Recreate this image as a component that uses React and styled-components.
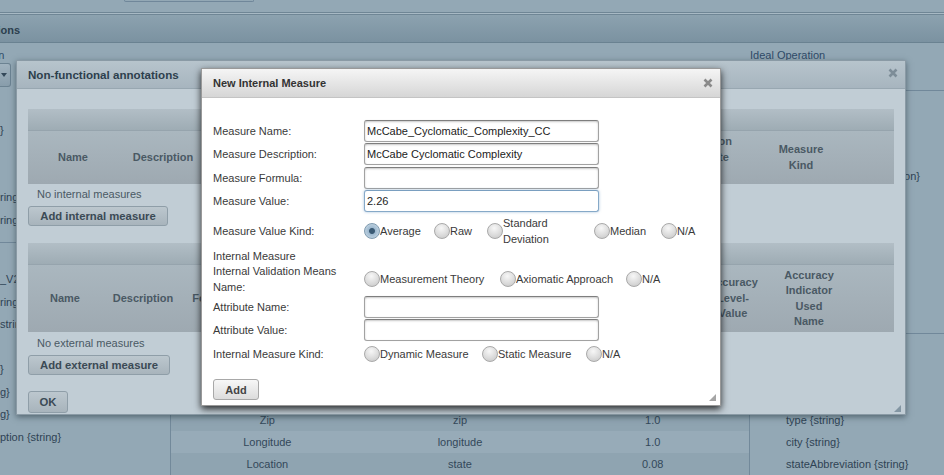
import React from "react";
import styled, { createGlobalStyle } from "styled-components";

const GlobalStyle = createGlobalStyle`
  html, body {
    margin: 0;
    padding: 0;
  }
  body {
    font-family: "Liberation Sans", Arial, sans-serif;
    font-size: 11px;
    background: #93a8b5;
  }
`;

/* ---------- background page (dimmed) ---------- */

const Page = styled.div`
  position: relative;
  width: 944px;
  height: 475px;
  overflow: hidden;
  display: flex;
  flex-direction: column;
  background: #93a8b5;
  color: #2f4354;
`;

const TopStrip = styled.div`
  height: 12px;
  padding-left: 124px;
  border-bottom: 1px solid #6f8695;
  box-shadow: 0 1px 0 #a7b9c4;
`;

const TopTab = styled.div`
  width: 128px;
  height: 1px;
  border: 1px solid #70879a;
  border-top: none;
  border-radius: 0 0 3px 3px;
`;

const SectionHeader = styled.div`
  margin-top: 1px;
  height: 27px;
  border-top: 1px solid #6f8695;
  border-bottom: 1px solid #6a8291;
  background: linear-gradient(#8ca2af, #7b92a1);
  display: flex;
  align-items: center;
  overflow: hidden;
`;

const SectionTitle = styled.span`
  margin-left: -38px;
  padding-top: 2px;
  font-weight: bold;
  color: #2c3f4e;
  white-space: nowrap;
`;

const Columns = styled.div`
  flex: 1;
  min-height: 0;
  display: grid;
  grid-template-columns: 170px 580px 1fr;
`;

const SideCol = styled.div`
  display: flex;
  flex-direction: column;
  padding-top: 4px;
  overflow: hidden;
  white-space: nowrap;
`;

const ColTitle = styled.div`
  line-height: 16px;
  margin-left: ${(p) => p.$shift || 0}px;
  color: #2f4b68;
`;

const SelectStub = styled.div`
  width: 9px;
  height: 22px;
  border: 1px solid #6c8392;
  border-left: none;
  border-radius: 0 3px 3px 0;
  background: linear-gradient(#a1b3bf, #889dab);
  display: flex;
  align-items: center;
  justify-content: flex-start;
  padding-left: 1px;
`;

const ItemList = styled.div`
  margin-top: ${(p) => p.$top || 0}px;
  padding-left: ${(p) => p.$indent || 0}px;
`;

const Item = styled.div`
  height: 22.5px;
  line-height: 22.5px;
`;

const Rule = styled.div`
  height: 1px;
  background: #71889a;
  margin-top: ${(p) => p.$top || 0}px;
`;

const CenterCol = styled.div`
  display: flex;
  flex-direction: column;
  justify-content: flex-end;
`;

const RowsBlock = styled.div`
  border-left: 1px solid #72899a;
  border-right: 1px solid #72899a;
`;

const DataRow = styled.div`
  display: grid;
  grid-template-columns: repeat(3, 1fr);
  height: 22px;
  line-height: 22px;
  text-align: center;
  color: #33485a;
  background: ${(p) => (p.$alt ? "#97abb8" : "#8fa4b1")};
`;

const BottomList = styled.div`
  margin-top: auto;
  padding-left: 36px;
`;

const BottomItem = styled.div`
  height: 22px;
  line-height: 22px;
`;

/* ---------- dialogs ---------- */

const Dialog = styled.div`
  position: absolute;
  left: ${(p) => p.$x}px;
  top: ${(p) => p.$y}px;
  width: ${(p) => p.$w}px;
  height: ${(p) => p.$h}px;
  box-sizing: border-box;
  display: flex;
  flex-direction: column;
`;

const AnnotationsDialog = styled(Dialog)`
  background: #c1cdd5;
  border: 1px solid #8a9aa5;
  box-shadow: 0 2px 6px rgba(30, 45, 55, 0.55);
`;

const MeasureDialog = styled(Dialog)`
  background: #fff;
  border: 1px solid #999;
  box-shadow: 0 3px 7px rgba(0, 0, 0, 0.8);
`;

const TitleBar = styled.div`
  flex: none;
  height: ${(p) => p.$h}px;
  display: flex;
  align-items: center;
  justify-content: space-between;
  padding: 0 7px 0 11px;
  font-weight: bold;
  font-size: ${(p) => (p.$dim ? "11.6px" : "11px")};
  background: ${(p) =>
    p.$dim ? "linear-gradient(#b7c4cc, #a7b5bf)" : "linear-gradient(#f5f5f5, #d6d6d6)"};
  border-bottom: 1px solid ${(p) => (p.$dim ? "#98a7b1" : "#c4c4c4")};
  color: ${(p) => (p.$dim ? "#2d3f4d" : "#333")};
`;

const CloseBtn = styled.svg`
  margin-top: ${(p) => p.$lift || 0}px;
`;

const Grip = styled.svg`
  position: absolute;
  right: 4px;
  bottom: ${(p) => p.$bottom}px;
`;

const DimBody = styled.div`
  padding: 20px 11px 0 11px;
  display: flex;
  flex-direction: column;
  align-items: flex-start;
`;

const Table = styled.div`
  align-self: stretch;
  margin-top: ${(p) => p.$top || 0}px;
`;

const Caption = styled.div`
  height: 21px;
  border-bottom: 1px solid #96a4ad;
  background: linear-gradient(#b2bec6, #9eacb4);
`;

const HeadRow = styled.div`
  display: grid;
  grid-template-columns: ${(p) => p.$cols};
  height: ${(p) => p.$h}px;
  background: linear-gradient(#aab7bf, #9ea9b1);
`;

const HeadCell = styled.div`
  display: flex;
  align-items: center;
  justify-content: center;
  text-align: center;
  white-space: pre-line;
  line-height: 15.5px;
  font-weight: bold;
  color: #4a5964;
`;

const EmptyNote = styled.div`
  margin-top: ${(p) => p.$top}px;
  padding-left: 9px;
  line-height: 16px;
  color: #4a5964;
`;

const DimButton = styled.button`
  margin-top: ${(p) => p.$top}px;
  height: ${(p) => p.$h || 20}px;
  width: ${(p) => p.$w}px;
  padding: 0;
  font-family: inherit;
  font-size: 11.3px;
  font-weight: bold;
  color: #3b4a55;
  background: linear-gradient(#bcc7ce, #a8b4bc);
  border: 1px solid #8f9ea8;
  border-radius: 3px;
`;

const FormBody = styled.div`
  padding: 21px 11px 0 11px;
  display: flex;
  flex-direction: column;
  align-items: flex-start;
`;

const FormRow = styled.div`
  display: grid;
  grid-template-columns: 151px auto;
  align-items: center;
  height: ${(p) => p.$h}px;
`;

const Label = styled.div`
  line-height: 16px;
  color: #3a3a3a;
`;

const TextField = styled.input`
  box-sizing: border-box;
  width: 235px;
  height: 22px;
  padding: 0 2px;
  font-family: inherit;
  font-size: 11px;
  color: #222;
  background: #fff;
  border: 1px solid ${(p) => (p.$focused ? "#86a9c8" : "#a2a2a2")};
  border-top-color: ${(p) => (p.$focused ? "#7a9fc0" : "#7e7e7e")};
  border-radius: 3px;
  box-shadow: ${(p) =>
    p.$focused
      ? "0 0 3px rgba(90, 140, 190, 0.55)"
      : "inset 0 1px 2px rgba(0, 0, 0, 0.22), 0 0 1px rgba(0, 0, 0, 0.15)"};
  outline: none;
`;

const RadioGroup = styled.div`
  display: flex;
  align-items: center;
`;

const RadioOption = styled.label`
  display: flex;
  align-items: center;
  width: ${(p) => (p.$w ? `${p.$w}px` : "auto")};
  color: #3a3a3a;
`;

const RadioDot = styled.span`
  flex: none;
  width: 16px;
  height: 16px;
  box-sizing: border-box;
  border-radius: 50%;
  border: 1px solid ${(p) => (p.$checked ? "#7f9bb0" : "#a9a9a9")};
  background: ${(p) =>
    p.$checked
      ? "radial-gradient(circle, #3a5a74 0, #3a5a74 2.5px, #9fbad0 3.5px, #d3e1eb 100%)"
      : "radial-gradient(circle at 45% 30%, #f7f7f7 0, #dcdcdc 55%, #c3c3c3 100%)"};
`;

const RadioText = styled.span`
  line-height: 16px;
  ${(p) => p.$textWidth && `width: ${p.$textWidth}px;`}
`;

const AddButton = styled.button`
  margin-top: 14px;
  width: 46px;
  height: 21px;
  padding: 0;
  font-family: inherit;
  font-size: 11px;
  font-weight: bold;
  color: #444;
  background: linear-gradient(#f7f7f7, #dcdcdc);
  border: 1px solid #a8a8a8;
  border-radius: 3px;
`;

/* ---------- data ---------- */

const leftTop = ["}", "", "", "ring}", "ring}"];
const leftBottom = ["", "_V2", "ring}", "string}", "", "}", "g}", "g}", "ption {string}"];

const centerRows = [
  ["Zip", "zip", "1.0"],
  ["Longitude", "longitude", "1.0"],
  ["Location", "state", "0.08"],
];

const rightRows = ["type {string}", "city {string}", "stateAbbreviation {string}"];

const internalCols = ["Name", "Description", "Formula", "Value", "Value Kind", "Validation\nAttribute\nValue", "Measure\nKind", ""];
const externalCols = ["Name", "Description", "Formula", "Value", "Measure Kind", "Scale", "Unit", "Accuracy\nLevel-\nValue", "Accuracy\nIndicator\nUsed\nName", ""];

const valueKinds = [
  { label: "Average", w: 70, checked: true },
  { label: "Raw", w: 53 },
  { label: "Standard Deviation", w: 107, textWidth: 60 },
  { label: "Median", w: 67 },
  { label: "N/A" },
];

const validationMeans = [
  { label: "Measurement Theory", w: 136 },
  { label: "Axiomatic Approach", w: 126 },
  { label: "N/A" },
];

const measureKinds = [
  { label: "Dynamic Measure", w: 118 },
  { label: "Static Measure", w: 104 },
  { label: "N/A" },
];

const CloseIcon = ({ color, lift }) => (
  <CloseBtn $lift={lift} width="10" height="10" viewBox="0 0 10 10">
    <path d="M1.5 1.5 L8.5 8.5 M8.5 1.5 L1.5 8.5" stroke={color} strokeWidth="2.6" />
  </CloseBtn>
);

const GripIcon = ({ color, bottom }) => (
  <Grip $bottom={bottom} width="7" height="7" viewBox="0 0 7 7">
    <polygon points="7,0 7,7 0,7" fill={color} />
  </Grip>
);

const Radios = ({ options }) => (
  <RadioGroup>
    {options.map((o) => (
      <RadioOption key={o.label} $w={o.w}>
        <RadioDot $checked={o.checked} />
        <RadioText $textWidth={o.textWidth}>{o.label}</RadioText>
      </RadioOption>
    ))}
  </RadioGroup>
);

const App = () => {
  return (
    <Page>
      <GlobalStyle />
      <TopStrip>
        <TopTab />
      </TopStrip>
      <SectionHeader>
        <SectionTitle>Operations</SectionTitle>
      </SectionHeader>

      <Columns>
        <SideCol>
          <ColTitle $shift={-44}>Operation</ColTitle>
          <SelectStub>
            <svg width="6" height="4" viewBox="0 0 6 4">
              <polygon points="0,0 6,0 3,4" fill="#34495a" />
            </svg>
          </SelectStub>
          <ItemList $top={31.75}>
            {leftTop.map((t, i) => (
              <Item key={i}>{t}</Item>
            ))}
          </ItemList>
          <Rule $top={10.75} />
          <ItemList $top={2.5}>
            {leftBottom.map((t, i) => (
              <Item key={i}>{t}</Item>
            ))}
          </ItemList>
        </SideCol>

        <CenterCol>
          <RowsBlock>
            {centerRows.map((r, i) => (
              <DataRow key={r[0]} $alt={i === 1}>
                {r.map((c) => (
                  <span key={c}>{c}</span>
                ))}
              </DataRow>
            ))}
          </RowsBlock>
        </CenterCol>

        <SideCol>
          <ColTitle>Ideal Operation</ColTitle>
          <Rule $top={27} />
          <ItemList $top={73.75} $indent={36}>
            <Item>measureUnit {"{enumeration}"}</Item>
          </ItemList>
          <Rule $top={145.75} />
          <BottomList>
            {rightRows.map((t) => (
              <BottomItem key={t}>{t}</BottomItem>
            ))}
          </BottomList>
        </SideCol>
      </Columns>

      <AnnotationsDialog $x={16} $y={60} $w={890} $h={355}>
        <TitleBar $dim $h={27}>
          <span>Non-functional annotations</span>
          <CloseIcon color="#7d8d98" lift={-3} />
        </TitleBar>
        <DimBody>
          <Table>
            <Caption />
            <HeadRow $h={53} $cols="90px 90px 150px 150px 152px 92px 98px 1fr">
              {internalCols.map((c, i) => (
                <HeadCell key={i}>{c}</HeadCell>
              ))}
            </HeadRow>
          </Table>
          <EmptyNote $top={2}>No internal measures</EmptyNote>
          <DimButton $top={4} $w={140}>Add internal measure</DimButton>
          <Table $top={17}>
            <Caption />
            <HeadRow $h={67} $cols="74px 82px 60px 110px 110px 110px 121px 76px 76px 1fr">
              {externalCols.map((c, i) => (
                <HeadCell key={i}>{c}</HeadCell>
              ))}
            </HeadRow>
          </Table>
          <EmptyNote $top={3}>No external measures</EmptyNote>
          <DimButton $top={4} $w={142}>Add external measure</DimButton>
          <DimButton $top={16} $w={40} $h={22}>OK</DimButton>
        </DimBody>
        <GripIcon color="#8396a3" bottom={2} />
      </AnnotationsDialog>

      <MeasureDialog $x={201} $y={68} $w={520} $h={338}>
        <TitleBar $h={28}>
          <span>New Internal Measure</span>
          <CloseIcon color="#8a8a8a" />
        </TitleBar>
        <FormBody>
          <FormRow $h={23.5}>
            <Label>Measure Name:</Label>
            <TextField readOnly value="McCabe_Cyclomatic_Complexity_CC" />
          </FormRow>
          <FormRow $h={23.5}>
            <Label>Measure Description:</Label>
            <TextField readOnly value="McCabe Cyclomatic Complexity" />
          </FormRow>
          <FormRow $h={23.5}>
            <Label>Measure Formula:</Label>
            <TextField readOnly value="" />
          </FormRow>
          <FormRow $h={23.5}>
            <Label>Measure Value:</Label>
            <TextField readOnly $focused value="2.26" />
          </FormRow>
          <FormRow $h={35}>
            <Label>Measure Value Kind:</Label>
            <Radios options={valueKinds} />
          </FormRow>
          <FormRow $h={15}>
            <Label>Internal Measure</Label>
          </FormRow>
          <FormRow $h={32}>
            <Label>
              Internal Validation Means
              <br />
              Name:
            </Label>
            <Radios options={validationMeans} />
          </FormRow>
          <FormRow $h={23.5}>
            <Label>Attribute Name:</Label>
            <TextField readOnly value="" />
          </FormRow>
          <FormRow $h={23.5}>
            <Label>Attribute Value:</Label>
            <TextField readOnly value="" />
          </FormRow>
          <FormRow $h={23}>
            <Label>Internal Measure Kind:</Label>
            <Radios options={measureKinds} />
          </FormRow>
          <AddButton>Add</AddButton>
        </FormBody>
        <GripIcon color="#a5a5a5" bottom={4} />
      </MeasureDialog>
    </Page>
  );
};

export default App;
